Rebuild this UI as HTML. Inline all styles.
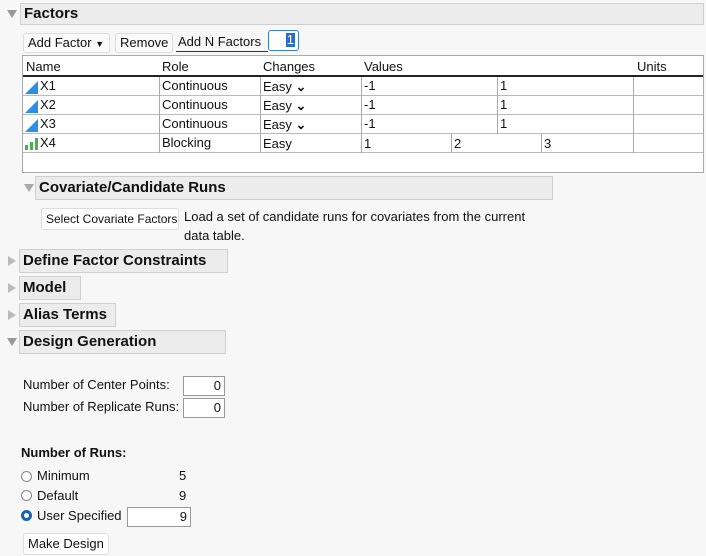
<!DOCTYPE html>
<html><head><style>
body{margin:0;width:706px;height:556px;background:#f7f7f7;font-family:"Liberation Sans",sans-serif;font-size:13px;color:#111;position:relative;overflow:hidden}
.a{position:absolute;white-space:nowrap}
.bar{position:absolute;background:#ececec;border:1px solid #cfcfcf;font-weight:bold;font-size:15px;padding-left:3px;box-sizing:border-box;line-height:22px;white-space:nowrap}
.tri{position:absolute;width:0;height:0}
.dn{border-left:5px solid transparent;border-right:5px solid transparent;border-top:8px solid #999}
.rt{border-top:5px solid transparent;border-bottom:5px solid transparent;border-left:8px solid #aaa}
.btn{position:absolute;background:#fafafa;border:1px solid #ddd;border-radius:3px;box-sizing:border-box;line-height:18px;padding:0 4px;white-space:nowrap}
.inp{position:absolute;background:#fff;border:1px solid #999;box-sizing:border-box;text-align:right;padding-right:3px;line-height:16px}
.vl{position:absolute;width:1px;background:#aaa}
.hl{position:absolute;height:1px;background:#bbb}
.rad{position:absolute;width:11px;height:11px;border-radius:50%;border:1px solid #888;box-sizing:border-box;background:#fff}
</style></head><body>
<div class="tri dn" style="left:7px;top:10px"></div>
<div class="bar" style="left:20px;top:3px;width:684px;height:22px;line-height:20px">Factors</div>
<div class="btn" style="left:23px;top:33px;width:87px;height:20px">Add Factor <span style="font-size:9px">▼</span></div>
<div class="btn" style="left:115px;top:33px;width:58px;height:20px">Remove</div>
<div class="a" style="left:178px;top:34px">Add N Factors</div>
<div class="hl" style="left:176px;top:51px;width:92px;background:#333"></div>
<div class="a" style="left:268px;top:30px;width:31px;height:21px;border:1px solid #3a7bd5;border-radius:3px;box-sizing:border-box;background:#fff"><span style="position:absolute;right:3px;top:2px;background:#2a6dd0;color:#fff;line-height:14px;padding:0 1px">1</span></div>
<div class="a" style="left:22px;top:55px;width:682px;height:118px;background:#fff;border:1px solid #aaa;box-sizing:border-box"></div>
<div class="a" style="left:26px;top:59px">Name</div>
<div class="a" style="left:162px;top:59px">Role</div>
<div class="a" style="left:263px;top:59px">Changes</div>
<div class="a" style="left:364px;top:59px">Values</div>
<div class="a" style="left:637px;top:59px">Units</div>
<div class="hl" style="left:23px;top:75px;width:680px;height:2px;background:#222"></div>
<div class="hl" style="left:23px;top:95px;width:680px"></div>
<div class="hl" style="left:23px;top:114px;width:680px"></div>
<div class="hl" style="left:23px;top:133px;width:680px"></div>
<div class="hl" style="left:23px;top:152px;width:680px"></div>
<div class="vl" style="left:159px;top:77px;height:76px"></div>
<div class="vl" style="left:260px;top:77px;height:76px"></div>
<div class="vl" style="left:361px;top:77px;height:76px"></div>
<div class="vl" style="left:497px;top:77px;height:57px"></div>
<div class="vl" style="left:451px;top:134px;height:19px"></div>
<div class="vl" style="left:541px;top:134px;height:19px"></div>
<div class="vl" style="left:633px;top:77px;height:76px"></div>
<svg class="a" style="left:25px;top:80px" width="14" height="14"><path d="M0 14L13 1V14Z" fill="#2d8ee8"/></svg>
<svg class="a" style="left:25px;top:99px" width="14" height="14"><path d="M0 14L13 1V14Z" fill="#2d8ee8"/></svg>
<svg class="a" style="left:25px;top:118px" width="14" height="14"><path d="M0 14L13 1V14Z" fill="#2d8ee8"/></svg>
<svg class="a" style="left:25px;top:136px" width="14" height="14"><rect x="0" y="9" width="3" height="5" fill="#4caf50"/><rect x="5" y="6" width="3" height="8" fill="#4caf50"/><rect x="10" y="2" width="3" height="12" fill="#4caf50"/></svg>
<div class="a" style="left:40px;top:78px">X1</div><div class="a" style="left:162px;top:78px">Continuous</div><div class="a" style="left:263px;top:79px">Easy <b>&#x2304;</b></div><div class="a" style="left:364px;top:78px">-1</div><div class="a" style="left:500px;top:78px">1</div>
<div class="a" style="left:40px;top:97px">X2</div><div class="a" style="left:162px;top:97px">Continuous</div><div class="a" style="left:263px;top:98px">Easy <b>&#x2304;</b></div><div class="a" style="left:364px;top:97px">-1</div><div class="a" style="left:500px;top:97px">1</div>
<div class="a" style="left:40px;top:116px">X3</div><div class="a" style="left:162px;top:116px">Continuous</div><div class="a" style="left:263px;top:117px">Easy <b>&#x2304;</b></div><div class="a" style="left:364px;top:116px">-1</div><div class="a" style="left:500px;top:116px">1</div>
<div class="a" style="left:40px;top:135px">X4</div><div class="a" style="left:162px;top:135px">Blocking</div><div class="a" style="left:263px;top:136px">Easy</div><div class="a" style="left:364px;top:136px">1</div><div class="a" style="left:454px;top:136px">2</div><div class="a" style="left:544px;top:136px">3</div>

<div class="tri dn" style="left:24px;top:184px;border-top-color:#aaa"></div>
<div class="bar" style="left:35px;top:176px;width:518px;height:24px">Covariate/Candidate Runs</div>
<div class="btn" style="left:41px;top:208px;width:138px;height:22px;line-height:20px;background:#fff;font-size:12px">Select Covariate Factors</div>
<div class="a" style="left:184px;top:207px;line-height:19px">Load a set of candidate runs for covariates from the current<br>data table.</div>

<div class="tri rt" style="left:8px;top:256px;border-left-color:#bbb"></div>
<div class="bar" style="left:19px;top:249px;width:209px;height:24px">Define Factor Constraints</div>
<div class="tri rt" style="left:8px;top:283px;border-left-color:#bbb"></div>
<div class="bar" style="left:19px;top:276px;width:62px;height:24px">Model</div>
<div class="tri rt" style="left:8px;top:310px;border-left-color:#bbb"></div>
<div class="bar" style="left:19px;top:303px;width:97px;height:24px">Alias Terms</div>
<div class="tri dn" style="left:7px;top:338px;border-top-color:#999"></div>
<div class="bar" style="left:19px;top:330px;width:207px;height:24px">Design Generation</div>

<div class="a" style="left:23px;top:377px">Number of Center Points:</div>
<div class="inp" style="left:183px;top:376px;width:42px;height:20px;line-height:18px">0</div>
<div class="a" style="left:23px;top:399px">Number of Replicate Runs:</div>
<div class="inp" style="left:183px;top:398px;width:42px;height:20px;line-height:18px">0</div>
<div class="a" style="left:21px;top:445px;font-weight:bold">Number of Runs:</div>
<div class="rad" style="left:21px;top:471px"></div><div class="a" style="left:37px;top:468px">Minimum</div><div class="a" style="left:179px;top:468px">5</div>
<div class="rad" style="left:21px;top:490px"></div><div class="a" style="left:37px;top:488px">Default</div><div class="a" style="left:179px;top:488px">9</div>
<div class="rad" style="left:21px;top:510px;border:3px solid #1560b8"></div><div class="a" style="left:37px;top:508px">User Specified</div>
<div class="inp" style="left:127px;top:507px;width:64px;height:20px;line-height:18px">9</div>
<div class="btn" style="left:23px;top:533px;width:86px;height:22px;line-height:20px;background:#fff">Make Design</div>
</body></html>
